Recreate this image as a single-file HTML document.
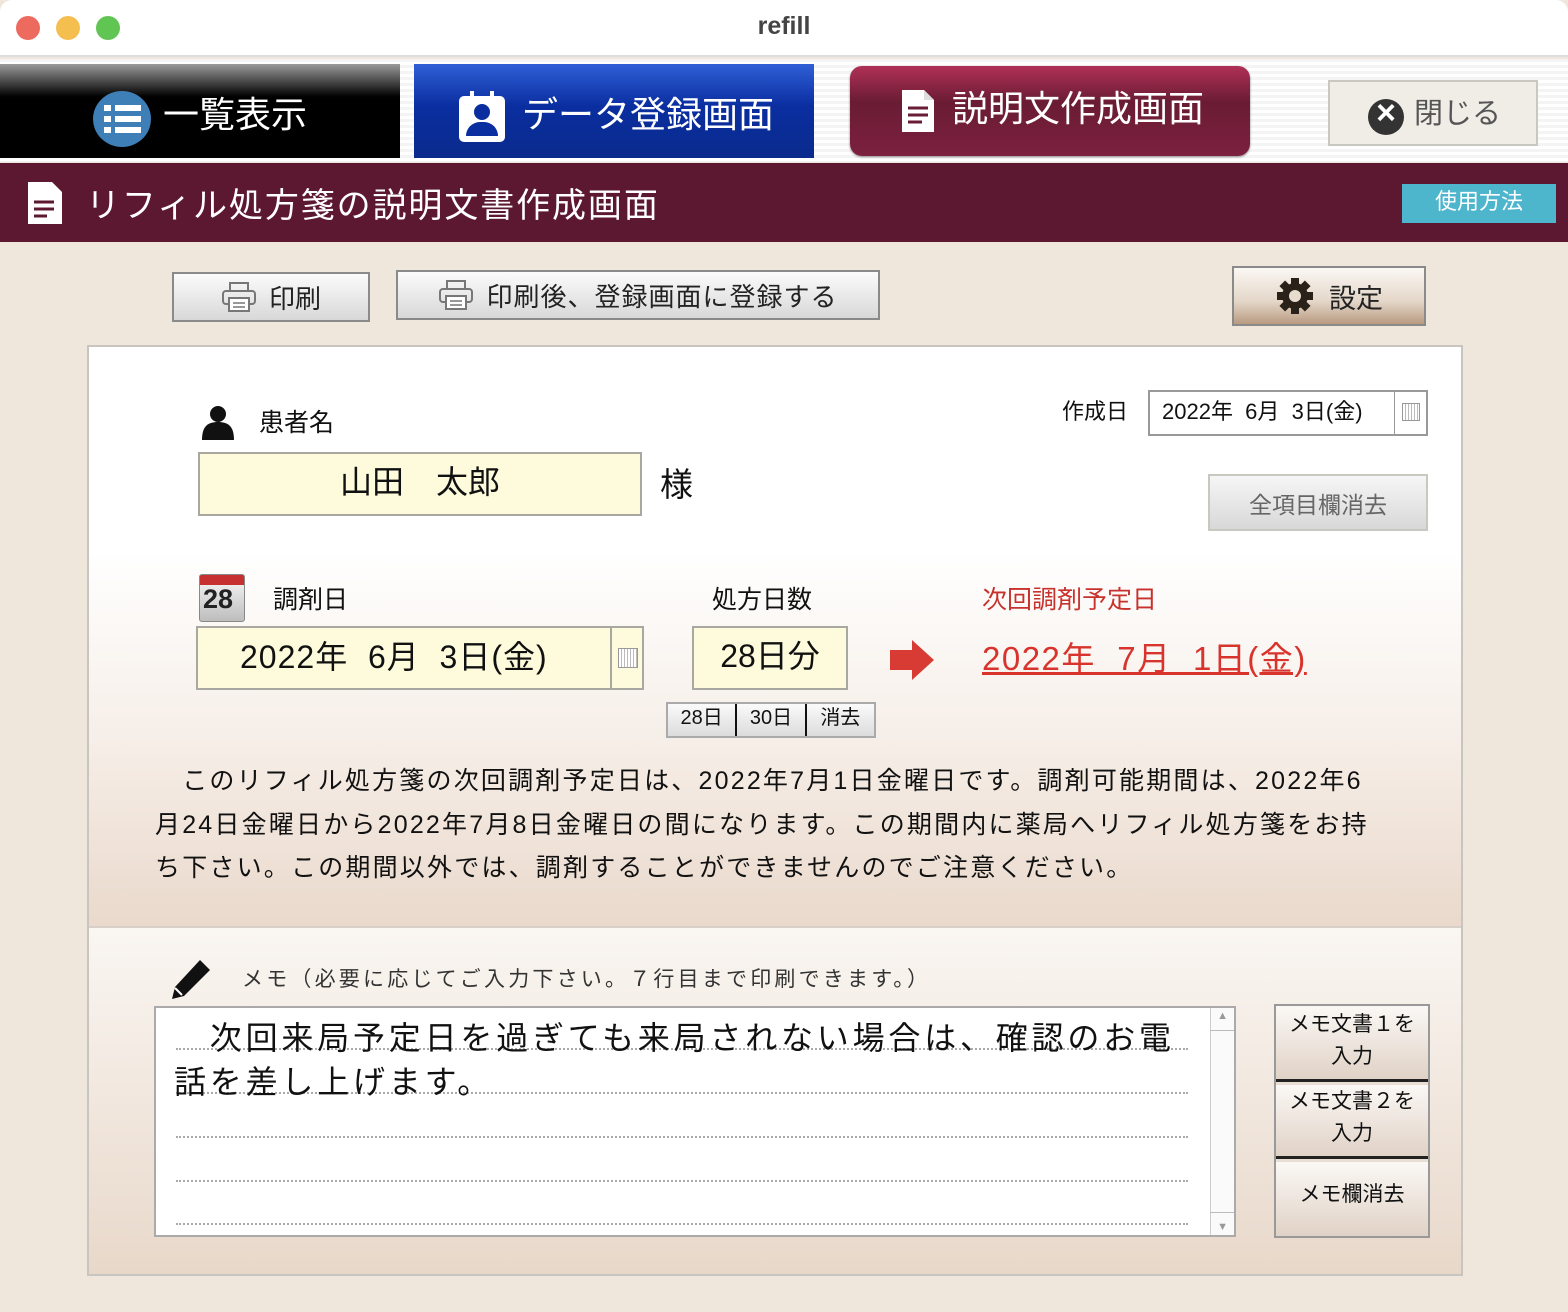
<!DOCTYPE html>
<html><head><meta charset="utf-8"><style>
*{margin:0;padding:0;box-sizing:border-box}
body{width:1568px;height:1312px;overflow:hidden;background:#efe6dc;font-family:"Liberation Sans","Noto Sans CJK JP",sans-serif;position:relative;color:#111}
.a{position:absolute}
.nw{white-space:nowrap}
.btn{position:absolute;border:2px solid #8a8a8a;background:linear-gradient(#fbfbfb,#d8d8d8);display:flex;align-items:center;justify-content:center;color:#222}
.dot{position:absolute;left:20px;right:46px;border-top:2px dotted #aaa}
</style></head><body>
<div class="a" style="left:0;top:0;width:1568px;height:57px;background:#fff;border-bottom:2px solid #ddd;border-radius:12px 12px 0 0"></div>
<div class="a" style="left:16px;top:16px;width:24px;height:24px;border-radius:50%;background:#ec6a5e"></div>
<div class="a" style="left:56px;top:16px;width:24px;height:24px;border-radius:50%;background:#f4bf4f"></div>
<div class="a" style="left:96px;top:16px;width:24px;height:24px;border-radius:50%;background:#61c554"></div>
<div class="a nw" style="left:0;width:1568px;top:12px;text-align:center;font-size:25px;font-weight:bold;color:#444">refill</div>
<div class="a" style="left:0;top:59px;width:1568px;height:103px;background:repeating-linear-gradient(#f4f4f4 0 3px,#fff 3px 6px)"></div>
<div class="a" style="left:0;top:64px;width:400px;height:94px;background:linear-gradient(#9a9a9a,#000 35%,#000)"></div>
<div class="a" style="left:93px;top:91px;width:58px;height:56px;border-radius:50%;background:#3f7fb8"></div>
<div class="a" style="left:104px;top:105px;width:7px;height:6px;background:#fff;box-shadow:0 11px #fff,0 22px #fff"></div>
<div class="a" style="left:115px;top:105px;width:26px;height:6px;background:#fff;box-shadow:0 11px #fff,0 22px #fff"></div>
<div class="a nw" style="left:163px;top:86px;font-size:36px;color:#fff">一覧表示</div>
<div class="a" style="left:414px;top:64px;width:400px;height:94px;background:linear-gradient(#2f5fd6,#0a2ea0 45%,#0a2a8c)"></div>
<div class="a" style="left:459px;top:96px;width:46px;height:46px;background:#fff;border-radius:5px"></div>
<div class="a" style="left:470px;top:91px;width:4px;height:10px;background:#fff;box-shadow:20px 0 #fff"></div>
<div class="a" style="left:474px;top:104px;width:16px;height:16px;border-radius:50%;background:#0a2ea0"></div>
<div class="a" style="left:466px;top:122px;width:32px;height:14px;border-radius:14px 14px 0 0;background:#0a2ea0"></div>
<div class="a nw" style="left:522px;top:86px;font-size:36px;color:#fff">データ登録画面</div>
<div class="a" style="left:850px;top:66px;width:400px;height:90px;border-radius:12px;background:linear-gradient(#b03058,#6a1c34 40%,#7c2040);box-shadow:0 1px 2px #888"></div>
<svg class="a" style="left:900px;top:88px" width="36" height="46" viewBox="0 0 36 46"><path d="M2 2h22l10 10v32H2z" fill="#fff"/><path d="M24 2v10h10" fill="#ddd"/><path d="M8 20h20M8 27h20M8 34h14" stroke="#6a1c34" stroke-width="3"/></svg>
<div class="a nw" style="left:952px;top:80px;font-size:36px;color:#fff">説明文作成画面</div>
<div class="a" style="left:1328px;top:80px;width:210px;height:66px;border:2px solid #c8c8c0;background:#efede6"></div>
<div class="a" style="left:1368px;top:99px;width:36px;height:36px;border-radius:50%;background:#333"></div>
<div class="a nw" style="left:1374px;top:94px;font-size:34px;color:#fff;font-weight:bold;width:24px;text-align:center">×</div>
<div class="a nw" style="left:1414px;top:90px;font-size:29px;color:#555">閉じる</div>
<div class="a" style="left:0;top:163px;width:1568px;height:79px;background:#5c1830"></div>
<svg class="a" style="left:26px;top:180px" width="38" height="46" viewBox="0 0 38 46"><path d="M2 2h24l10 10v32H2z" fill="#fff"/><path d="M8 22h20M8 29h20M8 36h13" stroke="#5c1830" stroke-width="3"/></svg>
<div class="a nw" style="left:86px;top:178px;font-size:34px;letter-spacing:1.9px;color:#fff">リフィル処方箋の説明文書作成画面</div>
<div class="a nw" style="left:1402px;top:184px;width:154px;height:39px;background:#4db5cc;color:#fff;font-size:22px;text-align:center;line-height:35px">使用方法</div>
<svg width="0" height="0" style="position:absolute"><defs><symbol id="pr" viewBox="0 0 36 30"><rect x="9" y="1" width="18" height="8" fill="none" stroke="#777" stroke-width="2"/><rect x="2" y="9" width="32" height="13" rx="3" fill="none" stroke="#777" stroke-width="2"/><rect x="8" y="16" width="20" height="13" fill="#fff" stroke="#777" stroke-width="2"/><path d="M12 21h12M12 25h12" stroke="#777" stroke-width="1.5"/></symbol></defs></svg>
<div class="btn" style="left:172px;top:272px;width:198px;height:50px;font-size:26px"><svg width="36" height="30" style="margin-right:12px"><use href="#pr"/></svg>印刷</div>
<div class="btn" style="left:396px;top:270px;width:484px;height:50px;font-size:26px;letter-spacing:1px"><svg width="36" height="30" style="margin-right:12px"><use href="#pr"/></svg>印刷後、登録画面に登録する</div>
<div class="btn" style="left:1232px;top:266px;width:194px;height:60px;background:linear-gradient(#fbf8f4,#e4d6c8 60%,#b89a80);font-size:27px"><svg width="40" height="40" viewBox="0 0 40 40" style="margin-right:14px"><g fill="#2a2118"><circle cx="20" cy="20" r="13"/><rect x="16" y="2" width="8" height="36"/><rect x="2" y="16" width="36" height="8"/><rect x="16" y="2" width="8" height="36" transform="rotate(45 20 20)"/><rect x="16" y="2" width="8" height="36" transform="rotate(-45 20 20)"/></g><circle cx="20" cy="20" r="6" fill="#e8dccf"/></svg>設定</div>
<div class="a" style="left:87px;top:345px;width:1376px;height:931px;border:2px solid #c8c4c0;background:#fff"></div>
<div class="a" style="left:89px;top:347px;width:1372px;height:579px;background:linear-gradient(#fff,#fff 35%,#f7f0ea 65%,#ead9cc)"></div>
<div class="a" style="left:89px;top:928px;width:1372px;height:346px;background:linear-gradient(#faf6f2,#e8d8ca)"></div>
<div class="a" style="left:89px;top:926px;width:1372px;height:2px;background:#d8d0c8"></div>
<svg class="a" style="left:200px;top:404px" width="36" height="36" viewBox="0 0 36 36"><circle cx="18" cy="10" r="8" fill="#111"/><path d="M2 36c0-14 6-18 16-18s16 4 16 18z" fill="#111"/></svg>
<div class="a nw" style="left:259px;top:403px;font-size:25px">患者名</div>
<div class="a nw" style="left:198px;top:452px;width:444px;height:64px;background:#fdfbdc;border:2px solid #a8a8a0;font-size:32px;text-align:center;line-height:56px">山田　太郎</div>
<div class="a nw" style="left:660px;top:458px;font-size:33px">様</div>
<div class="a nw" style="left:1062px;top:394px;font-size:22px">作成日</div>
<div class="a" style="left:1148px;top:390px;width:280px;height:46px;background:#fff;border:2px solid #999"></div>
<div class="a nw" style="left:1162px;top:394px;font-size:22px;white-space:pre">2022年  6月  3日(金)</div>
<div class="a" style="left:1394px;top:392px;width:1px;height:42px;background:#999"></div>
<div class="a" style="left:1402px;top:403px;width:18px;height:18px;border:1px solid #999;background:repeating-linear-gradient(90deg,#fff 0 2px,#bbb 2px 3px)"></div>
<div class="btn" style="left:1208px;top:474px;width:220px;height:57px;border-color:#c8c8c0;color:#666;font-size:23px;background:linear-gradient(#f6f6f6,#d8d8d8)">全項目欄消去</div>
<div class="a" style="left:199px;top:574px;width:46px;height:48px;border-radius:3px;background:linear-gradient(#c73030 0 10px,#ececec 10px,#bdbdbd);border:1px solid #888"></div>
<div class="a nw" style="left:203px;top:584px;font-size:27px;font-weight:bold;color:#222">28</div>
<div class="a nw" style="left:273px;top:580px;font-size:25px">調剤日</div>
<div class="a" style="left:196px;top:626px;width:448px;height:64px;background:#fdfbdc;border:2px solid #a8a8a0"></div>
<div class="a nw" style="left:240px;top:632px;font-size:32px;white-space:pre;letter-spacing:1px">2022年  6月  3日(金)</div>
<div class="a" style="left:610px;top:628px;width:2px;height:60px;background:#a8a8a0"></div>
<div class="a" style="left:618px;top:648px;width:20px;height:20px;border:1px solid #999;background:repeating-linear-gradient(90deg,#fff 0 2px,#bbb 2px 3px)"></div>
<div class="a nw" style="left:712px;top:580px;font-size:25px">処方日数</div>
<div class="a nw" style="left:692px;top:626px;width:156px;height:64px;background:#fdfbdc;border:2px solid #a8a8a0;font-size:32px;text-align:center;line-height:56px">28日分</div>
<div class="a" style="left:666px;top:702px;width:210px;height:36px;border:2px solid #aaa;background:linear-gradient(#fafafa,#dcdcdc);display:flex;font-size:20px">
<div style="flex:1;text-align:center;line-height:28px;border-right:2px solid #111">28日</div><div style="flex:1;text-align:center;line-height:28px;border-right:2px solid #111">30日</div><div style="flex:1;text-align:center;line-height:28px">消去</div></div>
<svg class="a" style="left:890px;top:640px" width="44" height="40" viewBox="0 0 44 40"><path d="M0 10h22V0l22 20-22 20V30H0z" fill="#d83a34"/></svg>
<div class="a nw" style="left:982px;top:580px;font-size:25px;color:#c8322c">次回調剤予定日</div>
<div class="a nw" style="left:982px;top:632px;font-size:33px;color:#d8332c;text-decoration:underline;white-space:pre;letter-spacing:1.5px">2022年  7月  1日(金)</div>
<div class="a nw" style="left:155px;top:760px;font-size:25px;line-height:43.5px;letter-spacing:2.2px;color:#111">　このリフィル処方箋の次回調剤予定日は、2022年7月1日金曜日です。調剤可能期間は、2022年6<br>月24日金曜日から2022年7月8日金曜日の間になります。この期間内に薬局へリフィル処方箋をお持<br>ち下さい。この期間以外では、調剤することができませんのでご注意ください。</div>
<svg class="a" style="left:170px;top:958px" width="42" height="42" viewBox="0 0 42 42"><path d="M30 2l10 10-26 26-12 3 3-12z" fill="#111"/><path d="M5 30l7 7" stroke="#fff" stroke-width="2"/></svg>
<div class="a nw" style="left:242px;top:963px;font-size:21px;letter-spacing:3.2px;color:#333">メモ（必要に応じてご入力下さい。７行目まで印刷できます。）</div>
<div class="a" style="left:154px;top:1006px;width:1082px;height:231px;background:#fff;border:2px solid #aaa">
<div class="dot" style="top:40px"></div><div class="dot" style="top:84px"></div><div class="dot" style="top:128px"></div><div class="dot" style="top:172px"></div><div class="dot" style="top:215px"></div>
<div class="a" style="right:0;top:0;width:24px;height:227px;border-left:1px solid #ccc;background:#fafafa"></div>
<div class="a" style="right:0;top:22px;width:24px;height:1px;background:#bbb"></div>
<div class="a" style="right:0;bottom:22px;width:24px;height:1px;background:#bbb"></div>
<div class="a nw" style="right:6px;top:2px;font-size:11px;color:#999">▲</div>
<div class="a nw" style="right:6px;bottom:2px;font-size:11px;color:#999">▼</div>
<div class="a nw" style="left:18px;top:8px;font-size:32px;line-height:44px;letter-spacing:3.8px">　次回来局予定日を過ぎても来局されない場合は、確認のお電<br>話を差し上げます。</div>
</div>
<div class="a" style="left:1274px;top:1004px;width:156px;height:234px;border:2px solid #999;background:#e9ded4">
<div class="a" style="left:0;top:0;width:152px;height:76px;background:linear-gradient(#fbf8f5,#e0d2c6);border-bottom:3px solid #222;font-size:21px;text-align:center;line-height:32px;padding-top:3px">メモ文書１を<br>入力</div>
<div class="a" style="left:0;top:79px;width:152px;height:74px;background:linear-gradient(#fbf8f5,#e0d2c6);border-bottom:3px solid #222;font-size:21px;text-align:center;line-height:32px;padding-top:1px">メモ文書２を<br>入力</div>
<div class="a" style="left:0;top:156px;width:152px;height:74px;background:linear-gradient(#fbf8f5,#e0d2c6);font-size:21px;text-align:center;line-height:66px">メモ欄消去</div>
</div>
</body></html>
